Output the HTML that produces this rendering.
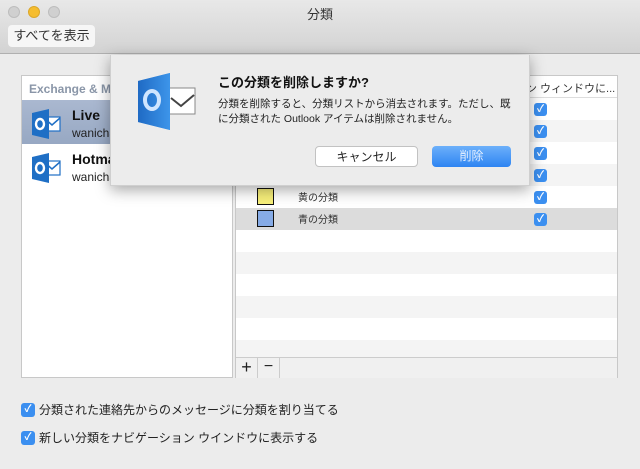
<!DOCTYPE html>
<html><head><meta charset="utf-8"><style>
*{margin:0;padding:0;box-sizing:border-box}
body{width:640px;height:469px;background:#ececec;font-family:"Liberation Sans","Noto Sans CJK JP",sans-serif;position:relative;overflow:hidden;font-size:12px;color:#222}
.abs{position:absolute}
.tb{left:0;top:0;width:640px;height:54px;background:linear-gradient(#e8e8e8,#d3d3d3);border-bottom:1px solid #b0b0b0}
.dot{width:12px;height:12px;border-radius:50%;top:6px;background:#d0d0d0;border:1px solid #bdbdbd}
.showall{left:8px;top:25px;width:87px;height:22px;background:#f6f6f6;border-radius:4px;font-size:13px;line-height:22px;text-align:center;color:#333}
.left{left:21px;top:75px;width:212px;height:303px;background:#fff;border:1px solid #c8c8c8}
.right{left:235px;top:75px;width:383px;height:303px;background:#fff;border:1px solid #c8c8c8}
.row{position:absolute;left:0;width:381px;height:22px}
.cb{position:absolute;width:13px;height:13px;border-radius:3px;background:#3b8ff0;color:#fff;font-size:10px;line-height:13px;text-align:center;font-weight:bold}
.sheet{left:110px;top:55px;width:420px;height:131px;background:#ececec;box-shadow:0 4px 14px rgba(0,0,0,.35);border:1px solid #cfcfcf;border-top:none}
.btn{height:21px;border-radius:4px;font-size:12px;line-height:20px;text-align:center}
</style></head><body>
<div class="abs tb"></div>
<div class="abs dot" style="left:8px"></div>
<div class="abs dot" style="left:28px;background:#f5bd2f;border-color:#dba72a"></div>
<div class="abs dot" style="left:48px"></div>
<div class="abs" style="left:0;width:640px;top:4px;text-align:center;font-size:13px;color:#333">分類</div>
<div class="abs showall">すべてを表示</div>

<div class="abs left">
 <div class="abs" style="left:7px;top:6px;font-size:12px;font-weight:bold;color:#8a96a8">Exchange &amp; Mi</div>
 <div class="abs" style="left:0;top:24px;width:210px;height:44px;background:linear-gradient(#aab8d0,#97a8c3)"></div>
 <svg class="abs" style="left:8px;top:32px" width="32" height="32" viewBox="0 0 32 32"><rect x="14" y="9" width="16" height="14" fill="#fff" stroke="#1f6fc5" stroke-width="1.2"/><path d="M14 10l8 7 8-7" fill="none" stroke="#1f6fc5" stroke-width="1.5"/><path d="M2 5l17-4v30L2 27z" fill="#1f6fc5"/><ellipse cx="10" cy="16" rx="4" ry="5" fill="none" stroke="#fff" stroke-width="2.4"/></svg>
 <div class="abs" style="left:50px;top:31px;font-size:14px;font-weight:bold;color:#111">Live</div>
 <div class="abs" style="left:50px;top:50px;font-size:12px;color:#222">wanicha</div>
 <svg class="abs" style="left:8px;top:76px" width="32" height="32" viewBox="0 0 32 32"><rect x="14" y="9" width="16" height="14" fill="#fff" stroke="#1f6fc5" stroke-width="1.2"/><path d="M14 10l8 7 8-7" fill="none" stroke="#1f6fc5" stroke-width="1.5"/><path d="M2 5l17-4v30L2 27z" fill="#1f6fc5"/><ellipse cx="10" cy="16" rx="4" ry="5" fill="none" stroke="#fff" stroke-width="2.4"/></svg>
 <div class="abs" style="left:50px;top:75px;font-size:14px;font-weight:bold;color:#111">Hotma</div>
 <div class="abs" style="left:50px;top:94px;font-size:12px;color:#222">wanicha</div>
</div>

<div class="abs right">
 <div class="abs" style="left:0;top:0;width:381px;height:22px;border-bottom:1px solid #ddd"></div>
 <div class="abs" style="left:290px;top:4px;font-size:11px;color:#333">ン ウィンドウに...</div>
 <div class="row" style="top:44px;background:#f4f4f4"></div>
 <div class="row" style="top:88px;background:#f4f4f4"></div>
 <div class="row" style="top:132px;background:#dcdcdc"></div>
 <div class="row" style="top:176px;background:#f4f4f4"></div>
 <div class="row" style="top:220px;background:#f4f4f4"></div>
 <div class="row" style="top:264px;background:#f4f4f4"></div>
 <div class="cb" style="left:298px;top:27px">✓</div>
 <div class="cb" style="left:298px;top:49px">✓</div>
 <div class="cb" style="left:298px;top:71px">✓</div>
 <div class="cb" style="left:298px;top:93px">✓</div>
 <div class="cb" style="left:298px;top:115px">✓</div>
 <div class="cb" style="left:298px;top:137px">✓</div>
 <div class="abs" style="left:21px;top:112px;width:17px;height:17px;background:#f7ef7a;border:1px solid #111"></div>
 <div class="abs" style="left:62px;top:113px;font-size:10px;color:#333">黄の分類</div>
 <div class="abs" style="left:21px;top:134px;width:17px;height:17px;background:#86abe6;border:1px solid #111"></div>
 <div class="abs" style="left:62px;top:135px;font-size:10px;color:#333">青の分類</div>
 <div class="abs" style="left:0;top:281px;width:381px;height:21px;background:#f0f0f0;border-top:1px solid #ccc"></div>
 <div class="abs" style="left:0;top:281px;width:22px;height:21px;border-right:1px solid #ccc;font-size:18px;line-height:20px;text-align:center">+</div>
 <div class="abs" style="left:22px;top:281px;width:22px;height:21px;border-right:1px solid #ccc;font-size:16px;line-height:19px;text-align:center">−</div>
</div>

<div class="abs sheet">
 <svg class="abs" style="left:26px;top:17px" width="64" height="60" viewBox="0 0 64 60"><rect x="32" y="16" width="26" height="26" fill="#fff" stroke="#888" stroke-width="1"/><path d="M34 26l10 8 13-11" fill="none" stroke="#444" stroke-width="2"/><path d="M1 9L33 1v57L1 50z" fill="#2d7fd6"/><path d="M1 9L33 1v57L1 50z" fill="url(#g)"/><defs><linearGradient id="g" x1="0" x2="1"><stop offset="0" stop-color="#1f6ac4"/><stop offset="1" stop-color="#3d95ea"/></linearGradient></defs><ellipse cx="15" cy="28" rx="7" ry="9" fill="none" stroke="#cfe5ff" stroke-width="4"/></svg>
 <div class="abs" style="left:107px;top:17px;font-size:13px;font-weight:bold;color:#111">この分類を削除しますか?</div>
 <div class="abs" style="left:107px;top:42px;font-size:10.5px;line-height:15px;color:#222;width:300px">分類を削除すると、分類リストから消去されます。ただし、既<br>に分類された Outlook アイテムは削除されません。</div>
 <div class="abs btn" style="left:204px;top:91px;width:103px;background:#fff;border:1px solid #c2c2c2;color:#222">キャンセル</div>
 <div class="abs btn" style="left:321px;top:91px;width:79px;background:linear-gradient(#6cb0fa,#2d84f2);color:#e8f1ff">削除</div>
</div>

<div class="cb" style="left:21px;top:403px;width:14px;height:14px">✓</div>
<div class="abs" style="left:39px;top:401px;font-size:12px;color:#222">分類された連絡先からのメッセージに分類を割り当てる</div>
<div class="cb" style="left:21px;top:431px;width:14px;height:14px">✓</div>
<div class="abs" style="left:39px;top:429px;font-size:12px;color:#222">新しい分類をナビゲーション ウインドウに表示する</div>
</body></html>
